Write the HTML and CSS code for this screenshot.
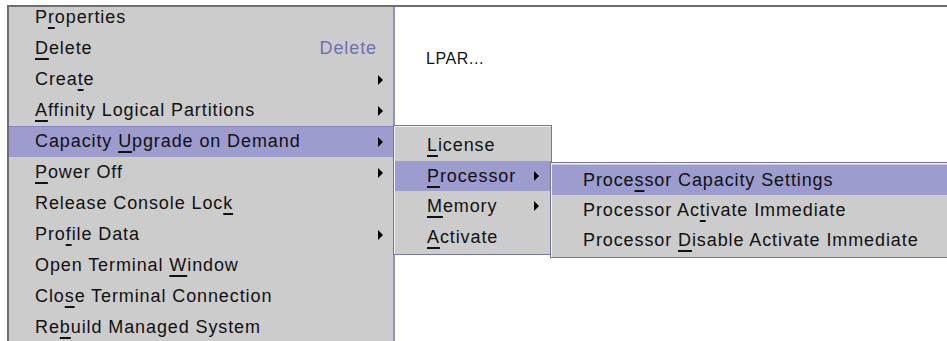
FILE: index.html
```html
<!DOCTYPE html>
<html lang="en">
<head>
    <meta charset="UTF-8">
    <meta name="viewport" content="width=device-width, initial-scale=1.0">
    <title>Managed System Menu</title>
    <link rel="stylesheet" href="styles.css">
</head>
<body>
    <div class="frame">
        <!-- Main context menu -->
        <ul class="menu main-menu">
            <li class="item"><span class="label">P<u>r</u>operties</span></li>
            <li class="item"><span class="label"><u>D</u>elete</span><span class="accel">Delete</span></li>
            <li class="item"><span class="label">Crea<u>t</u>e</span><span class="arrow"></span></li>
            <li class="item"><span class="label"><u>A</u>ffinity Logical Partitions</span><span class="arrow"></span></li>
            <li class="item selected"><span class="label">Capacity <u>U</u>pgrade on Demand</span><span class="arrow"></span></li>
            <li class="item"><span class="label"><u>P</u>ower Off</span><span class="arrow"></span></li>
            <li class="item"><span class="label">Release Console Loc<u>k</u></span></li>
            <li class="item"><span class="label">Pro<u>f</u>ile Data</span><span class="arrow"></span></li>
            <li class="item"><span class="label">Open Terminal <u>W</u>indow</span></li>
            <li class="item"><span class="label">Clo<u>s</u>e Terminal Connection</span></li>
            <li class="item"><span class="label">Re<u>b</u>uild Managed System</span></li>
        </ul>

        <!-- Work area behind the menus -->
        <div class="content">
            <p class="lpar">LPAR...</p>
        </div>

        <!-- Capacity Upgrade on Demand submenu -->
        <ul class="menu popup cod-menu">
            <li class="item"><span class="label"><u>L</u>icense</span></li>
            <li class="item selected"><span class="label"><u>P</u>rocessor</span><span class="arrow"></span></li>
            <li class="item"><span class="label"><u>M</u>emory</span><span class="arrow"></span></li>
            <li class="item"><span class="label"><u>A</u>ctivate</span></li>
        </ul>

        <!-- Processor submenu -->
        <ul class="menu popup proc-menu">
            <li class="item selected"><span class="label">Proce<u>s</u>sor Capacity Settings</span></li>
            <li class="item"><span class="label">Processor Ac<u>t</u>ivate Immediate</span></li>
            <li class="item"><span class="label">Processor <u>D</u>isable Activate Immediate</span></li>
        </ul>
    </div>
</body>
</html>
```

FILE: styles.css
```css
html, body {
    margin: 0;
    padding: 0;
    background-color: #fff;
    overflow: hidden;
}
body {
    width: 947px;
    height: 341px;
    font-family: "Liberation Sans", Arial, sans-serif;
    color: #000;
}
.frame {
    position: relative;
    display: flex;
    margin: 5px 0 0 7px;
    height: 336px;
    border-top: 2px solid #6e6e6e;
    border-left: 2px solid #6e6e6e;
    overflow: hidden;
}
.menu {
    list-style: none;
    margin: 0;
    padding: 0;
    background-color: #cccccc;
    font-size: 18px;
    letter-spacing: 0.9px;
    color: #111;
}
.item {
    display: flex;
    align-items: center;
    justify-content: space-between;
    height: 31px;
    line-height: 31px;
    white-space: nowrap;
}
.item.selected {
    background-color: #9c9ccf;
}
.label u {
    text-decoration: underline;
    text-decoration-thickness: 1.5px;
    text-underline-offset: 4px;
}
.accel {
    color: #7070b0;
    margin-right: 6px;
}
.arrow {
    width: 0;
    height: 0;
    border-left: 5px solid #000;
    border-top: 5px solid transparent;
    border-bottom: 5px solid transparent;
}

/* main menu */
.main-menu {
    flex: none;
    width: 384px;
    margin-top: -5px;
    border-right: 2px solid #9090c4;
}
.main-menu .item {
    padding: 0 10px 0 26px;
}
.main-menu .item.selected {
    box-shadow: inset 0 1px 0 #8585bb;
}

.content {
    flex: 1;
}
.lpar {
    margin: 0;
    padding: 43px 0 0 31px;
    font-size: 16px;
    line-height: 18px;
    letter-spacing: 0.6px;
    color: #111;
}

/* popup submenus */
.popup {
    position: absolute;
    box-sizing: border-box;
    padding: 1px 0 1px 1px;
    border: 1px solid #7474aa;
    box-shadow: inset 1px 1px 0 #f2f2f8;
}
.popup .item {
    padding-left: 32px;
}
.cod-menu {
    left: 384px;
    top: 118px;
    width: 159px;
    height: 130px;
    padding-top: 4px;
}
.cod-menu .item {
    height: 30.5px;
    line-height: 30.5px;
    padding-right: 12px;
}
.proc-menu {
    left: 541px;
    top: 155px;
    width: 420px;
    height: 96px;
    padding-top: 2px;
}
.proc-menu .item {
    height: 30px;
    line-height: 30px;
    padding-left: 31px;
}
```
